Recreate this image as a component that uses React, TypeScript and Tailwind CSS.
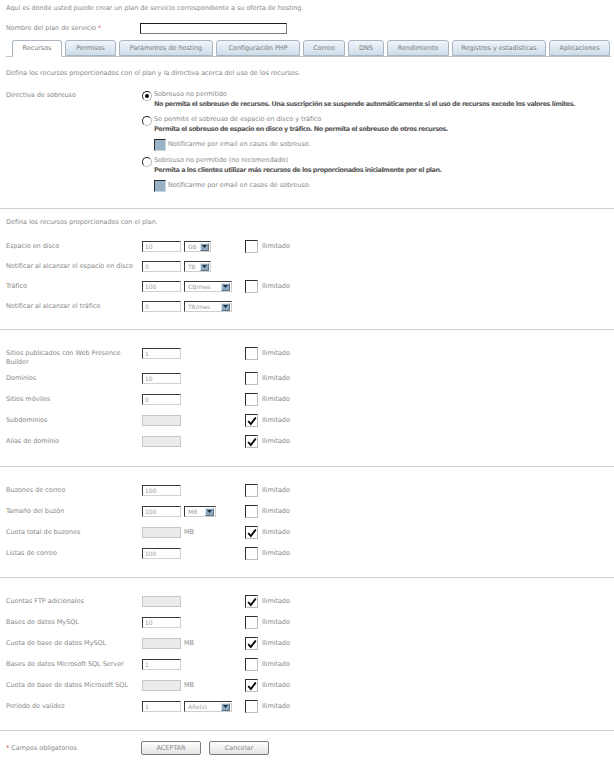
import React from "react";

function TextInput({ value = "", w = "w-[39px]" }: { value?: string; w?: string }) {
  return (
    <div
      className={`${w} h-[11px] shrink-0 bg-white border border-t-[#3a3a3a] border-l-[#3a3a3a] border-r-[#d0d0d0] border-b-[#d0d0d0] pl-[2px] text-[6px] leading-[9px] text-[#a0a0a0]`}
    >
      {value}
    </div>
  );
}

function Disabled() {
  return <div className="w-[39px] h-[11px] shrink-0 bg-[#ebebeb] border border-[#c6c6c6]" />;
}

function Select({ label, w }: { label: string; w: string }) {
  return (
    <div
      className={`${w} h-[11px] shrink-0 flex items-center justify-between bg-white border border-t-[#3a3a3a] border-l-[#3a3a3a] border-r-[#d0d0d0] border-b-[#d0d0d0] pl-[3px] pr-[1px] text-[6px] leading-[9px] text-[#a0a0a0]`}
    >
      <span>{label}</span>
      <span className="w-[9px] h-[8px] bg-[#8da8be] border border-t-[#dce6ee] border-l-[#dce6ee] border-r-[#5d7588] border-b-[#5d7588] flex items-center justify-center">
        <svg width="5" height="3" viewBox="0 0 5 3">
          <path d="M0 0 L5 0 L2.5 3 Z" fill="#1f2f3c" />
        </svg>
      </span>
    </div>
  );
}

function Check({ checked = false }: { checked?: boolean }) {
  return (
    <div className="w-[13px] h-[13px] shrink-0 bg-white border border-t-[#2e2e2e] border-l-[#2e2e2e] border-r-[#bdbdbd] border-b-[#bdbdbd] flex items-center justify-center">
      {checked && (
        <svg width="10" height="10" viewBox="0 0 10 10">
          <path d="M1.2 5 L3.8 8 L8.8 1.5" stroke="#000" strokeWidth="1.9" fill="none" />
        </svg>
      )}
    </div>
  );
}

function GrayCheck() {
  return (
    <div className="w-[12px] h-[12px] shrink-0 bg-[#9ab2c6] border border-t-[#2e2e2e] border-l-[#2e2e2e] border-r-[#c8d4de] border-b-[#c8d4de]" />
  );
}

function Radio({ checked = false }: { checked?: boolean }) {
  return (
    <div className="w-[10px] h-[10px] rounded-full bg-white border border-t-[#2a2a2a] border-l-[#2a2a2a] border-r-[#b8b8b8] border-b-[#b8b8b8] flex items-center justify-center">
      {checked && <div className="w-[4px] h-[4px] rounded-full bg-black" />}
    </div>
  );
}

function Row({
  label,
  field,
  check,
  h = "h-[21px]",
}: {
  label: React.ReactNode;
  field: React.ReactNode;
  check?: boolean;
  h?: string;
}) {
  return (
    <div className={`flex ${h}`}>
      <div className="w-[142px] shrink-0 pl-[6px] pt-[2px] leading-[9px]">{label}</div>
      <div className="w-[103px] shrink-0 h-[13px] flex items-center gap-[3px]">{field}</div>
      {check !== undefined && (
        <div className="h-[13px] flex items-center gap-[4px]">
          <Check checked={check} />
          <span>Ilimitado</span>
        </div>
      )}
    </div>
  );
}

function Hr() {
  return <div className="h-px bg-[#cfcfcf] w-full" />;
}

const tabs: { label: string; w: string; active?: boolean }[] = [
  { label: "Recursos", w: "w-[50px]", active: true },
  { label: "Permisos", w: "w-[51px]" },
  { label: "Parámetros de hosting", w: "w-[94px]" },
  { label: "Configuración PHP", w: "w-[84px]" },
  { label: "Correo", w: "w-[42px]" },
  { label: "DNS", w: "w-[36px]" },
  { label: "Rendimiento", w: "w-[62px]" },
  { label: "Registros y estadísticas", w: "w-[94px]" },
  { label: "Aplicaciones", w: "w-[61px]" },
];

function Option({
  label,
  bold,
  checked,
  notify,
  className,
}: {
  label: string;
  bold: string;
  checked?: boolean;
  notify?: boolean;
  className?: string;
}) {
  return (
    <div className={`flex ${className ?? ""}`}>
      <div className="w-[12px] shrink-0 pt-[2px]">
        <Radio checked={checked} />
      </div>
      <div className="flex flex-col">
        <div className="leading-[10px]">{label}</div>
        <div className="leading-[10px] font-bold text-[#5a5a5a] tracking-[-0.5px]">{bold}</div>
        {notify && (
          <div className="flex items-center gap-[2px] mt-[5px]">
            <GrayCheck />
            <span>Notificarme por email en casos de sobreuso.</span>
          </div>
        )}
      </div>
    </div>
  );
}

export default function App() {
  return (
    <div className="w-[614px] h-[765px] overflow-hidden bg-white text-[6.5px] text-[#8a8a8a] tracking-[-0.05px] font-['DejaVu_Sans',sans-serif]">
      {/* header */}
      <div className="pt-[4px] pl-[6px] leading-[9px]">
        Aquí es donde usted puede crear un plan de servicio correspondiente a su oferta de hosting.
      </div>
      <div className="flex items-center mt-[10px] h-[11px]">
        <div className="w-[140px] pl-[6px] leading-[9px]">
          Nombre del plan de servicio <span className="text-[#d04040]">*</span>
        </div>
        <div className="w-[147px] h-[11px] bg-white border border-t-[#1e1e1e] border-l-[#1e1e1e] border-r-[#7a7a7a] border-b-[#7a7a7a]" />
      </div>

      {/* tabs */}
      <div className="mt-[6px] ml-[6px] mr-[3px] pl-[6px] flex gap-[3px] border-b border-[#b9c3cc] h-[17px] items-end">
        {tabs.map((t) => (
          <div
            key={t.label}
            className={`${t.w} shrink-0 h-[16px] rounded-t-[3px] border border-[#a9b6c2] flex items-center justify-center leading-[9px] text-[#7d7d7d] ${
              t.active ? "bg-white border-b-white -mb-px h-[17px]" : "bg-gradient-to-b from-[#f1f6fa] to-[#cddcea]"
            }`}
          >
            {t.label}
          </div>
        ))}
      </div>

      {/* section 1 */}
      <div className="pl-[6px] mt-[12px] leading-[9px]">
        Defina los recursos proporcionados con el plan y la directiva acerca del uso de los recursos.
      </div>
      <div className="flex mt-[11px]">
        <div className="w-[142px] shrink-0 pl-[6px] pt-[2px] leading-[9px]">Directiva de sobreuso</div>
        <div className="flex flex-col">
          <Option
            checked
            label="Sobreuso no permitido"
            bold="No permita el sobreuso de recursos. Una suscripción se suspende automáticamente si el uso de recursos excede los valores límites."
          />
          <Option
            className="mt-[5px]"
            label="Se permite el sobreuso de espacio en disco y tráfico"
            bold="Permita el sobreuso de espacio en disco y tráfico. No permita el sobreuso de otros recursos."
            notify
          />
          <Option
            className="mt-[4px]"
            label="Sobreuso no permitido (no recomendado)"
            bold="Permita a los clientes utilizar más recursos de los proporcionados inicialmente por el plan."
            notify
          />
        </div>
      </div>
      <div className="mt-[16px]">
        <Hr />
      </div>

      {/* section 2 */}
      <div className="pl-[6px] mt-[9px] leading-[9px]">Defina los recursos proporcionados con el plan.</div>
      <div className="mt-[13px] pb-[9px]">
        <Row h="h-[20px]" label="Espacio en disco" field={<><TextInput value="10" /><Select label="GB" w="w-[27px]" /></>} check={false} />
        <Row h="h-[20px]" label="Notificar al alcanzar el espacio en disco" field={<><TextInput value="0" /><Select label="TB" w="w-[27px]" /></>} />
        <Row h="h-[20px]" label="Tráfico" field={<><TextInput value="100" /><Select label="CB/mes" w="w-[48px]" /></>} check={false} />
        <Row h="h-[20px]" label="Notificar al alcanzar el tráfico" field={<><TextInput value="0" /><Select label="TB/mes" w="w-[48px]" /></>} />
      </div>
      <Hr />

      {/* section 3 */}
      <div className="pt-[17px] pb-[10px]">
        <Row h="h-[25px]" label={<>Sitios publicados con Web Presence<br />Builder</>} field={<TextInput value="1" />} check={false} />
        <Row label="Dominios" field={<TextInput value="10" />} check={false} />
        <Row label="Sitios móviles" field={<TextInput value="0" />} check={false} />
        <Row label="Subdominios" field={<Disabled />} check />
        <Row label="Alias de dominio" field={<Disabled />} check />
      </div>
      <Hr />

      {/* section 4 */}
      <div className="pt-[17px] pb-[9px]">
        <Row label="Buzones de correo" field={<TextInput value="100" />} check={false} />
        <Row label="Tamaño del buzón" field={<><TextInput value="100" /><Select label="MB" w="w-[32px]" /></>} check={false} />
        <Row label="Cuota total de buzones" field={<><Disabled /><span>MB</span></>} check />
        <Row label="Listas de correo" field={<TextInput value="100" />} check={false} />
      </div>
      <Hr />

      {/* section 5 */}
      <div className="pt-[17px] pb-[9px]">
        <Row label="Cuentas FTP adicionales" field={<Disabled />} check />
        <Row label="Bases de datos MySQL" field={<TextInput value="10" />} check={false} />
        <Row label="Cuota de base de datos MySQL" field={<><Disabled /><span>MB</span></>} check />
        <Row label="Bases de datos Microsoft SQL Server" field={<TextInput value="1" />} check={false} />
        <Row label="Cuota de base de datos Microsoft SQL" field={<><Disabled /><span>MB</span></>} check />
        <Row label="Periodo de validez" field={<><TextInput value="1" /><Select label="Año(s)" w="w-[48px]" /></>} check={false} />
      </div>
      <Hr />

      {/* footer */}
      <div className="flex items-center mt-[10px] h-[14px]">
        <div className="w-[141px] pl-[6px] leading-[9px]">
          <span className="text-[#d04040]">*</span> Campos obligatorios
        </div>
        <button className="w-[60px] h-[14px] rounded-[2px] border border-[#7c7c7c] bg-gradient-to-b from-white to-[#e4e4e4] text-[#8a8a8a] leading-[9px]">
          ACEPTAR
        </button>
        <button className="ml-[8px] w-[60px] h-[14px] rounded-[2px] border border-[#7c7c7c] bg-gradient-to-b from-white to-[#e4e4e4] text-[#8a8a8a] leading-[9px]">
          Cancelar
        </button>
      </div>
    </div>
  );
}
